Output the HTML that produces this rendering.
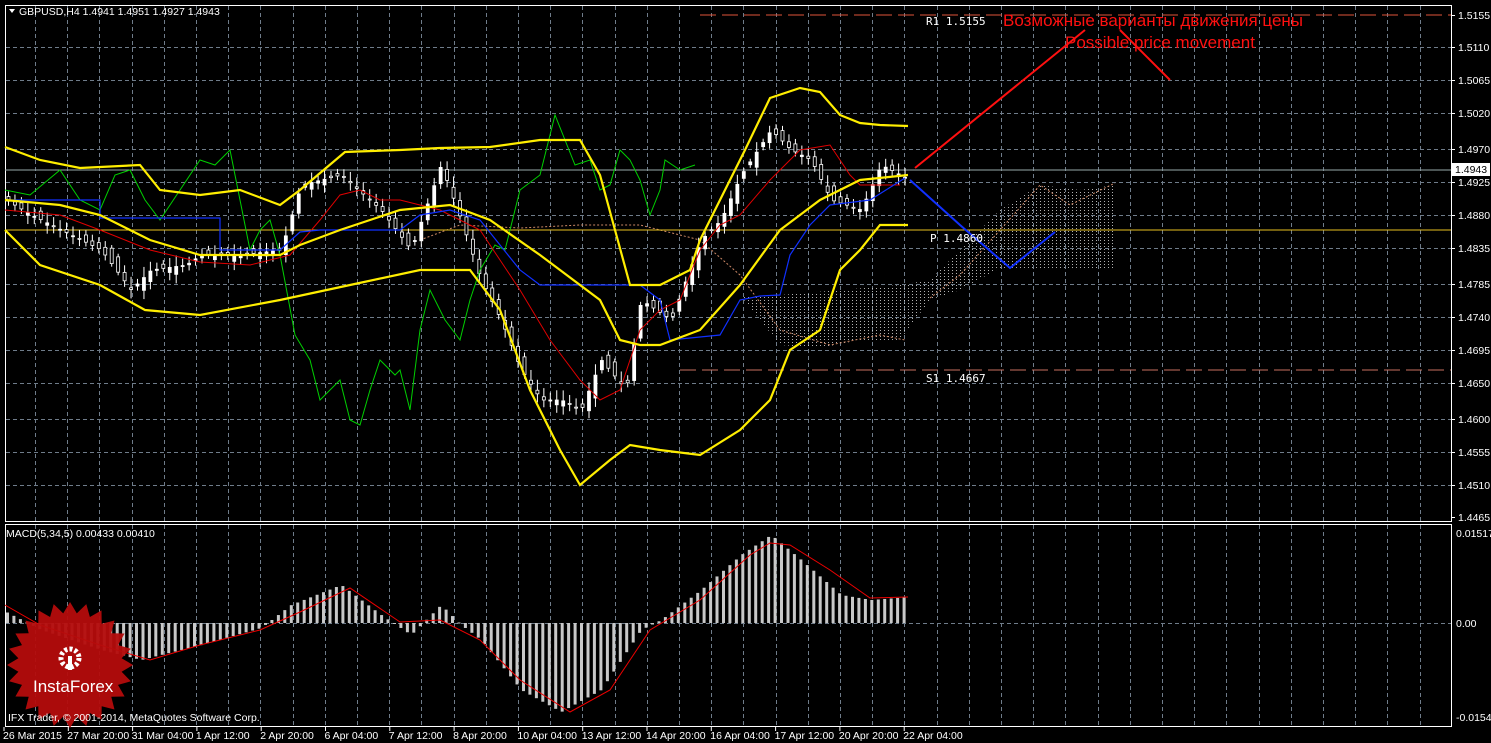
<!DOCTYPE html>
<html><head><meta charset="utf-8"><style>
html,body{margin:0;padding:0;background:#000;width:1491px;height:743px;overflow:hidden}
svg{display:block}
text{font-family:"Liberation Sans",sans-serif;font-size:10.5px;fill:#fff}
</style></head><body>
<svg id="s" width="1491" height="743" viewBox="0 0 1491 743" xmlns="http://www.w3.org/2000/svg">
<defs>
<pattern id="hatch" width="4" height="3" patternUnits="userSpaceOnUse"><rect x="0" y="0" width="1" height="1" fill="#ddd"/></pattern>
</defs>
<rect width="1491" height="743" fill="#000"/>
<g id="grid" stroke="#6f7c8a" stroke-dasharray="4,3" stroke-width="1"></g>
<rect x="5.5" y="5.5" width="1446" height="516" fill="none" stroke="#fff"/>
<rect x="5.5" y="524.5" width="1446" height="202" fill="none" stroke="#fff"/>
<polygon points="740,295 780,295 840,290 900,285 930,280 960,250 1000,210 1040,185 1080,190 1115,185 1115,268 1060,268 1000,268 960,290 930,300 900,340 860,340 820,348 780,345 760,320" fill="url(#hatch)" opacity="0.8"/>
<polyline points="930,298 960,275 1000,230 1040,185 1070,205 1115,183" fill="none" stroke="#c86" stroke-dasharray="2,2"/>
<polyline points="420,240 460,225 520,228 580,225 640,225 700,240 740,275 780,330 830,345 880,335 905,340" fill="none" stroke="#c86" stroke-dasharray="2,2"/>
<line x1="700" y1="15" x2="1451" y2="15" stroke="#e0553a" stroke-dasharray="16,6"/>
<line x1="680" y1="370" x2="1451" y2="370" stroke="#c97060" stroke-dasharray="16,6"/>
<line x1="5" y1="230" x2="1451" y2="230" stroke="#e8c020"/>
<line x1="5" y1="170" x2="1451" y2="170" stroke="#9aa"/>
<g id="candles"></g>
<g fill="none" stroke-width="1">
<polyline stroke="#00d000" points="5,190 30,195 60,170 80,200 100,210 115,175 130,170 145,200 160,220 180,190 200,160 215,165 230,150 240,200 250,250 260,230 270,220 280,255 295,335 310,360 320,400 340,380 350,420 360,425 370,390 380,360 395,375 400,370 410,410 420,330 430,290 445,320 460,340 470,300 480,270 495,245 505,250 520,190 540,175 555,115 565,140 575,165 590,160 600,190 610,185 620,150 630,160 640,180 650,215 660,190 665,160 680,170 695,165"/>
<polyline stroke="#e00000" points="5,210 60,215 100,230 150,250 200,262 250,265 290,255 320,220 340,195 360,190 380,200 400,200 440,210 480,230 500,260 520,290 550,340 580,380 600,400 620,390 640,330 660,310 680,300 700,250 720,225 740,215 770,180 800,150 830,145 850,175 860,185 900,185"/>
<polyline stroke="#1030ff" stroke-width="1.2" points="5,200 100,200 100,218 220,218 220,250 280,250 300,232 320,230 400,230 420,215 450,210 480,220 520,270 540,285 640,285 660,300 670,340 720,335 740,300 760,296 780,295 790,255 810,225 830,205 870,200 905,178"/>
<polyline stroke="#1030ff" stroke-width="2" points="910,180 960,225 1010,268 1055,232"/>
<g stroke="#ffee00" stroke-width="2.2">
<polyline points="5,147 40,160 80,168 140,165 160,190 200,195 240,190 280,205 300,190 345,152 400,150 440,148 490,147 540,140 580,140 600,175 615,230 630,285 660,285 690,270 700,240 720,200 745,150 770,98 800,88 820,92 840,115 860,123 880,125 908,126"/>
<polyline points="5,200 60,205 100,215 150,240 200,255 280,255 300,245 340,230 400,210 450,205 490,220 540,255 600,300 620,340 640,345 660,345 700,330 740,285 780,230 820,200 860,180 908,175"/>
<polyline points="5,230 40,265 100,285 145,310 200,315 280,300 350,285 420,270 470,270 500,310 530,390 560,450 580,485 610,460 630,445 660,450 700,455 740,430 770,400 790,350 820,330 840,270 860,250 880,225 908,225"/>
</g>
<polyline stroke="#ff1010" stroke-width="2" points="915,168 1085,30"/>
<polyline stroke="#ff1010" stroke-width="2" points="1120,30 1170,80"/>
</g>
<g id="hist"></g>
<polyline fill="none" stroke="#e00" points="5,605 40,625 100,645 150,660 200,645 260,630 300,612 350,588 400,622 440,620 480,640 520,680 570,712 610,690 650,630 700,600 750,555 770,543 790,545 830,570 870,598 908,597"/>
<polygon points="9,9 15,9 12,13" fill="#fff"/>
<text x="19" y="15">GBPUSD,H4  1.4941 1.4951 1.4927 1.4943</text>
<text x="6" y="537">MACD(5,34,5) 0.00433 0.00410</text>
<text x="926" y="25" style="font-family:'DejaVu Sans Mono','Liberation Mono',monospace;font-size:11px">R1 1.5155</text>
<text x="930" y="242" style="font-family:'DejaVu Sans Mono','Liberation Mono',monospace;font-size:11px">P 1.4860</text>
<text x="926" y="382" style="font-family:'DejaVu Sans Mono','Liberation Mono',monospace;font-size:11px">S1 1.4667</text>
<text x="1003" y="26" style="font-size:17px;fill:#ff1010;font-family:'Liberation Sans',sans-serif">Возможные варианты движения цены</text>
<text x="1065" y="48" style="font-size:17px;fill:#ff1010;font-family:'Liberation Sans',sans-serif">Possible price movement</text>
<g id="yax"></g>
<rect x="1452" y="163" width="38" height="13" fill="#fff"/>
<text x="1455" y="173" style="fill:#000">1.4943</text>
<text x="1456" y="537">0.01517</text>
<text x="1456" y="627">0.00</text>
<text x="1456" y="721">-0.01541</text>
<g id="xax"></g>
<polygon id="star" fill="#b40c0c" opacity="0.95"/>
<g fill="#fff" transform="translate(70,658)">
<circle r="9" fill="none" stroke="#fff" stroke-width="5" stroke-dasharray="3,2.2"/>
<rect x="-2" y="-2" width="4" height="14"/>
</g>
<text x="33" y="692" style="font-size:17px;font-family:'Liberation Sans',sans-serif">InstaForex</text>
<text x="8" y="721">IFX Trader, © 2001-2014, MetaQuotes Software Corp.</text>
</svg>
<script>
(function(){
var NS="http://www.w3.org/2000/svg";
function el(p,t,a,txt){var e=document.createElementNS(NS,t);for(var k in a)e.setAttribute(k,a[k]);if(txt)e.textContent=txt;p.appendChild(e);return e;}
var g=document.getElementById("grid");
for(var x=35;x<1451;x+=32.2){el(g,"line",{x1:Math.round(x)+.5,y1:6,x2:Math.round(x)+.5,y2:521});el(g,"line",{x1:Math.round(x)+.5,y1:525,x2:Math.round(x)+.5,y2:726});}
var ys=[15,47,80,113,149,182,215,248,284,317,350,383,419,452,485,517];
var ls=["1.5155","1.5110","1.5065","1.5020","1.4970","1.4925","1.4880","1.4835","1.4785","1.4740","1.4695","1.4650","1.4600","1.4555","1.4510","1.4465"];
var ya=document.getElementById("yax");
ys.forEach(function(y,i){if(i>0&&i<15)el(g,"line",{x1:6,y1:y+.5,x2:1451,y2:y+.5});el(ya,"line",{x1:1451,y1:y+.5,x2:1455,y2:y+.5,stroke:"#fff"});el(ya,"text",{x:1458,y:y+4},ls[i]);});
el(g,"line",{x1:6,y1:623.5,x2:1451,y2:623.5});
var xa=document.getElementById("xax");
var xl=["26 Mar 2015","27 Mar 20:00","31 Mar 04:00","1 Apr 12:00","2 Apr 20:00","6 Apr 04:00","7 Apr 12:00","8 Apr 20:00","10 Apr 04:00","13 Apr 12:00","14 Apr 20:00","16 Apr 04:00","17 Apr 12:00","20 Apr 20:00","22 Apr 04:00"];
xl.forEach(function(t,i){var x=3+i*64.3;el(xa,"text",{x:x,y:739},t);el(xa,"line",{x1:x+1,y1:727,x2:x+1,y2:731,stroke:"#fff"});});
function interp(pts,x){for(var i=0;i<pts.length-1;i++){if(x>=pts[i][0]&&x<=pts[i+1][0]){var t=(x-pts[i][0])/(pts[i+1][0]-pts[i][0]);return pts[i][1]+t*(pts[i+1][1]-pts[i][1]);}}return pts[pts.length-1][1];}
var hp=[[5,612],[40,630],[100,650],[140,660],[200,645],[260,628],[290,605],[340,585],[380,615],[410,635],[440,605],[460,625],[480,640],[520,690],[560,712],[600,690],[640,630],[660,620],[700,590],[740,555],[770,535],[800,560],[840,595],[870,600],[908,597]];
var h=document.getElementById("hist");
for(var x=6;x<=908;x+=6.45){var y=interp(hp,x);var y0=Math.min(y,623),y1=Math.max(y,623);el(h,"rect",{x:x.toFixed(1),y:y0,width:3,height:Math.max(1,y1-y0),fill:"#c8c8c8"});}
var cp=[[5,200],[30,215],[60,230],[100,250],[130,290],[150,270],[185,265],[200,255],[240,255],[280,250],[300,185],[340,175],[380,210],[410,250],[440,165],[460,220],[480,280],[500,320],[520,370],[540,400],[560,400],[580,410],[600,360],[625,390],[640,300],[670,320],[700,240],[720,220],[740,175],[770,130],[790,150],[810,160],[830,200],[860,210],[880,165],[905,178]];
var c=document.getElementById("candles");var prev=200;var s=1;
for(var x=7;x<=905;x+=6.45){var cl=interp(cp,x);s=(s*9301+49297)%233280;var r=s/233280;var o=prev+(r-0.5)*14;var tp=Math.min(o,cl),bt=Math.max(o,cl);var up=cl<o;
el(c,"line",{x1:x+1.5,y1:tp-3-r*8,x2:x+1.5,y2:bt+3+r*6,stroke:"#fff"});
el(c,"rect",{x:x,y:tp,width:3,height:Math.max(1,bt-tp),fill:up?"#fff":"#000",stroke:"#fff","stroke-width":0.8});prev=cl;}
var st=[],cx=70,cy=665;for(var i=0;i<48;i++){var a=i*Math.PI/24;var R=i%2?52:63;st.push((cx+R*Math.cos(a)).toFixed(1)+","+(cy+R*Math.sin(a)).toFixed(1));}
document.getElementById("star").setAttribute("points",st.join(" "));
})();
</script>
</body></html>
